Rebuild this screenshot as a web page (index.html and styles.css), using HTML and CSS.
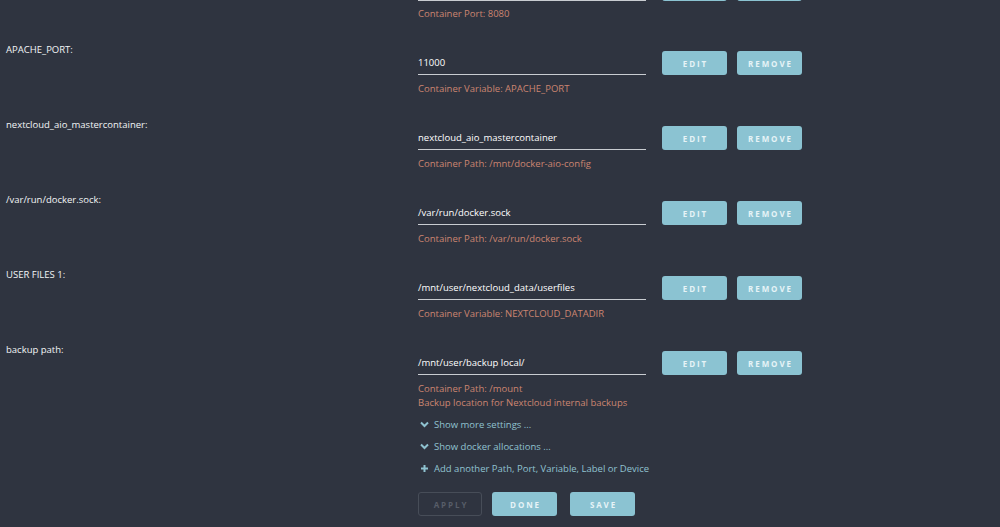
FILE: index.html
```html
<!DOCTYPE html>
<html lang="en">

<head>
    <meta charset="UTF-8">
    <meta name="viewport" content="width=device-width, initial-scale=1.0">
    <title>Update Container</title>
    <link rel="stylesheet" href="styles.css">
</head>

<body>
    <div id="form">
        <!-- row scrolled above the top, only its bottom shows -->
        <div class="row clipped">
            <div class="label"></div>
            <div class="field">
                <div class="line">
                    <div class="value"></div>
                    <button class="btn"></button>
                    <button class="btn"></button>
                </div>
                <div class="help">Container Port: 8080</div>
            </div>
        </div>

        <div class="row">
            <div class="label">APACHE_PORT:</div>
            <div class="field">
                <div class="line">
                    <div class="value">11000</div>
                    <button class="btn">Edit</button>
                    <button class="btn">Remove</button>
                </div>
                <div class="help">Container Variable: APACHE_PORT</div>
            </div>
        </div>

        <div class="row">
            <div class="label">nextcloud_aio_mastercontainer:</div>
            <div class="field">
                <div class="line">
                    <div class="value">nextcloud_aio_mastercontainer</div>
                    <button class="btn">Edit</button>
                    <button class="btn">Remove</button>
                </div>
                <div class="help">Container Path: /mnt/docker-aio-config</div>
            </div>
        </div>

        <div class="row">
            <div class="label">/var/run/docker.sock:</div>
            <div class="field">
                <div class="line">
                    <div class="value">/var/run/docker.sock</div>
                    <button class="btn">Edit</button>
                    <button class="btn">Remove</button>
                </div>
                <div class="help">Container Path: /var/run/docker.sock</div>
            </div>
        </div>

        <div class="row">
            <div class="label">USER FILES 1:</div>
            <div class="field">
                <div class="line">
                    <div class="value">/mnt/user/nextcloud_data/userfiles</div>
                    <button class="btn">Edit</button>
                    <button class="btn">Remove</button>
                </div>
                <div class="help">Container Variable: NEXTCLOUD_DATADIR</div>
            </div>
        </div>

        <div class="row last">
            <div class="label">backup path:</div>
            <div class="field">
                <div class="line">
                    <div class="value">/mnt/user/backup local/</div>
                    <button class="btn">Edit</button>
                    <button class="btn">Remove</button>
                </div>
                <div class="help">Container Path: /mount<br>Backup location for Nextcloud internal backups</div>

                <div class="links">
                    <a class="link">
                        <svg width="9" height="7" viewBox="0 0 9 7"><path d="M1 1.5 L4.5 5 L8 1.5" fill="none" stroke="currentColor" stroke-width="2"/></svg>
                        Show more settings ...
                    </a>
                    <a class="link">
                        <svg width="9" height="7" viewBox="0 0 9 7"><path d="M1 1.5 L4.5 5 L8 1.5" fill="none" stroke="currentColor" stroke-width="2"/></svg>
                        Show docker allocations ...
                    </a>
                    <a class="link">
                        <svg width="9" height="9" viewBox="0 0 9 9"><path d="M4.5 1 V8 M1 4.5 H8" fill="none" stroke="currentColor" stroke-width="2"/></svg>
                        Add another Path, Port, Variable, Label or Device
                    </a>
                </div>

                <div class="actions">
                    <button class="btn apply">Apply</button>
                    <button class="btn">Done</button>
                    <button class="btn save">Save</button>
                </div>
            </div>
        </div>
    </div>
</body>

</html>
```

FILE: styles.css
```css
body {
    font-family: "Open Sans", "Noto Sans", sans-serif;
    font-size: 9.5px;
    background-color: #2f3440;
    color: #eceff2;
    margin: 0;
    padding: 0;
}

#form {
    margin-top: -32px;
}

.row {
    display: grid;
    grid-template-columns: 418px 1fr;
    margin-bottom: 22px;
}

.label {
    padding-left: 6px;
    line-height: 14px;
    min-height: 14px;
    color: #f2f4f6;
}

.field {
    padding-top: 8px;
}

.clipped .field {
    padding-top: 9px;
}

.clipped .help {
    margin-top: 6px;
}

.line {
    display: flex;
    align-items: center;
}

.value {
    width: 228px;
    height: 23px;
    line-height: 23px;
    border-bottom: 1px solid #c9ccd1;
    color: #ffffff;
    margin-right: 16px;
    white-space: nowrap;
}

.btn {
    width: 65px;
    height: 24px;
    margin-right: 10px;
    padding: 0 0 0 2px;
    background-color: #8bc3d2;
    color: #e6f3f7;
    border: none;
    border-radius: 3px;
    font-family: "Open Sans", "Noto Sans", sans-serif;
    font-size: 8px;
    font-weight: bold;
    letter-spacing: 1.9px;
    text-transform: uppercase;
    cursor: pointer;
}

.help {
    margin-top: 7px;
    line-height: 14px;
    color: #cc8571;
}

.links {
    margin-top: 7px;
}

.link {
    display: flex;
    align-items: center;
    height: 14px;
    margin-bottom: 8px;
    color: #8fc2d0;
    cursor: pointer;
}

.link svg {
    margin: 0 5px 0 2px;
}

.actions {
    display: flex;
    margin-top: 17px;
}

.apply {
    width: 64px;
    background-color: transparent;
    border: 1px solid #474d58;
    color: #575d68;
}

.save {
    margin-left: 3px;
}
```
